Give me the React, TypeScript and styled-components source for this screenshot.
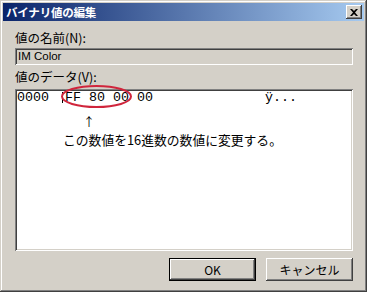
import React from 'react';
import styled, { createGlobalStyle } from 'styled-components';

const FACE = '#d4d0c8';
const SHADOW = '#808080';
const DARK = '#404040';
const UI_FONT = '"Noto Sans CJK JP", "Liberation Sans", sans-serif';

const GlobalStyle = createGlobalStyle`
  html, body {
    margin: 0;
    padding: 0;
    background: ${FACE};
  }
  * {
    box-sizing: border-box;
  }
`;

const Window = styled.div`
  width: 367px;
  height: 292px;
  padding: 3px;
  background: ${FACE};
  display: flex;
  flex-direction: column;
  font-family: ${UI_FONT};
  font-size: 12.5px;
  color: #000;
  box-shadow: inset -1px -1px ${DARK}, inset 1px 1px ${FACE},
    inset -2px -2px ${SHADOW}, inset 2px 2px #fff;
`;

const TitleBar = styled.div`
  height: 18px;
  display: flex;
  align-items: center;
  justify-content: space-between;
  padding: 0 2px 0 3px;
  background: linear-gradient(to right, #0a246a, #a6caf0);
`;

const Title = styled.span`
  color: #fff;
  font-weight: bold;
  font-size: 11.5px;
  line-height: 18px;
  letter-spacing: -0.2px;
`;

const CloseButton = styled.div`
  width: 16px;
  height: 14px;
  display: flex;
  align-items: center;
  justify-content: center;
  background: ${FACE};
  box-shadow: inset -1px -1px ${DARK}, inset 1px 1px #fff,
    inset -2px -2px ${SHADOW}, inset 2px 2px ${FACE};
`;

const Body = styled.div`
  flex: 1;
  display: flex;
  flex-direction: column;
  padding: 9px 11px 0 12px;
`;

const Label = styled.div<{ $gap?: number }>`
  line-height: 15px;
  height: 15px;
  margin-top: ${(p) => p.$gap ?? 0}px;
`;

const NameField = styled.div`
  margin-top: 3px;
  height: 17px;
  padding: 0 3px;
  line-height: 17px;
  font-family: "Liberation Sans", "Noto Sans CJK JP", sans-serif;
  font-size: 11.5px;
  background: ${FACE};
  box-shadow: inset 1px 1px ${SHADOW}, inset -1px -1px #fff,
    inset 2px 2px ${DARK}, inset -2px -2px ${FACE};
`;

const DataBox = styled.div`
  position: relative;
  margin-top: 5px;
  height: 162px;
  padding: 2px;
  background: #fff;
  box-shadow: inset 1px 1px ${SHADOW}, inset -1px -1px #fff,
    inset 2px 2px ${DARK}, inset -2px -2px ${FACE};
`;

const HexRow = styled.div`
  white-space: pre;
  font-family: "Liberation Mono", monospace;
  font-size: 13.333px;
  line-height: 13px;
`;

const Caret = styled.span`
  display: inline-block;
  width: 1px;
  height: 11px;
  background: #000;
  vertical-align: -2px;
  margin: 0 -6px 0 5px;
`;

const Mark = styled.svg`
  position: absolute;
  left: 46px;
  top: -4px;
  overflow: visible;
`;

const Note = styled.div`
  padding-left: 46px;
  margin-top: 11px;
`;

const Arrow = styled.div`
  line-height: 14px;
  height: 14px;
  padding-left: 20px;
  font-size: 12px;
`;

const NoteText = styled.div`
  margin-top: 3px;
  line-height: 16px;
  font-size: 12.8px;
  white-space: nowrap;
`;

const ButtonRow = styled.div`
  margin-top: 7px;
  display: flex;
  justify-content: flex-end;
  gap: 10px;
`;

const Button = styled.div<{ $default?: boolean }>`
  width: 87px;
  height: 23px;
  display: flex;
  align-items: center;
  justify-content: center;
  font-size: 12px;
  background: ${FACE};
  box-shadow: ${(p) =>
    p.$default
      ? `inset 0 0 0 1px #000, inset -2px -2px ${DARK}, inset 2px 2px #fff, inset -3px -3px ${SHADOW}`
      : `inset -1px -1px ${DARK}, inset 1px 1px #fff, inset -2px -2px ${SHADOW}, inset 2px 2px ${FACE}`};
`;

const App: React.FC = () => {
  return (
    <>
      <GlobalStyle />
      <Window>
        <TitleBar>
          <Title>バイナリ値の編集</Title>
          <CloseButton>
            <svg width="8" height="7" viewBox="0 0 8 7">
              <path d="M0 0h2l2 2 2-2h2L5 3.5 8 7H6L4 5 2 7H0l3-3.5z" fill="#000" />
            </svg>
          </CloseButton>
        </TitleBar>
        <Body>
          <Label>値の名前(N):</Label>
          <NameField>IM Color</NameField>
          <Label $gap={4}>値のデータ(V):</Label>
          <DataBox>
            <HexRow>
              {'0000 '}
              <Caret />
              {' FF 80 00 00              ÿ...'}
            </HexRow>
            <Mark width="71" height="23">
              <ellipse cx="35.5" cy="11.5" rx="34.5" ry="10.5" fill="none" stroke="#d0253c" strokeWidth="2" />
            </Mark>
            <Note>
              <Arrow>↑</Arrow>
              <NoteText>この数値を16進数の数値に変更する。</NoteText>
            </Note>
          </DataBox>
          <ButtonRow>
            <Button $default>OK</Button>
            <Button>キャンセル</Button>
          </ButtonRow>
        </Body>
      </Window>
    </>
  );
};

export default App;
